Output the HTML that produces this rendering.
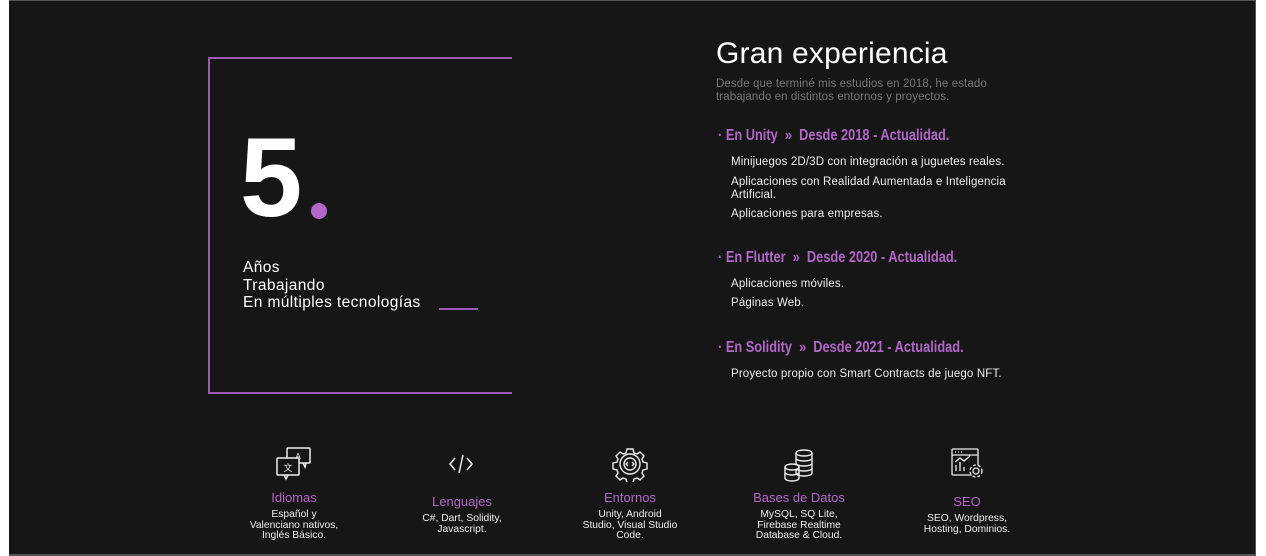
<!DOCTYPE html>
<html><head><meta charset="utf-8"><style>
*{margin:0;padding:0;box-sizing:border-box}
body{width:1266px;height:556px;background:#fff;position:relative;overflow:hidden;font-family:"Liberation Sans",sans-serif}
#bg{position:absolute;left:9px;top:0;width:1247px;height:556px;background:#161616;border-top:1px solid #555;border-bottom:2px solid #555;border-right:1px solid #555}
.a{position:absolute}
.h{font-family:"Liberation Sans Narrow","Liberation Sans",sans-serif;font-weight:bold;font-size:16px;color:#b266c8;transform:scaleX(0.8);transform-origin:0 0;white-space:nowrap}
.li{font-size:11.5px;color:#eee;letter-spacing:0.15px}
.ic{position:absolute;text-align:center;width:160px}
.ic .t{font-size:13px;color:#b266c8}
.ic .d{font-size:10.3px;color:#eee;line-height:10.5px;margin-top:5px}
</style></head><body>
<div id="bg"></div>
<div class="a" style="left:208px;top:57px;width:304px;height:337px;border:2px solid #9b5bb0;border-right:none"></div>
<div class="a" style="left:240px;top:118px;font-size:112px;font-weight:bold;color:#fff;line-height:120px">5</div>
<div class="a" style="left:311px;top:203px;width:16px;height:16px;border-radius:50%;background:#b266c8"></div>
<div class="a" style="left:243px;top:259px;color:#fff;font-size:15.5px;line-height:17.5px;letter-spacing:0.4px">Años<br>Trabajando<br>En múltiples tecnologías</div>
<div class="a" style="left:439px;top:308px;width:39px;height:2px;background:#9b5bb0"></div>

<div class="a" style="left:716px;top:37px;color:#fff;font-size:30px;letter-spacing:0.2px">Gran experiencia</div>
<div class="a" style="left:716px;top:78px;color:#777;font-size:11.5px;line-height:13px;letter-spacing:0.1px">Desde que terminé mis estudios en 2018, he estado<br>trabajando en distintos entornos y proyectos.</div>

<div class="a h" style="left:718px;top:127px">· En Unity &nbsp;» &nbsp;Desde 2018 - Actualidad.</div>
<div class="a li" style="left:731px;top:156px">Minijuegos 2D/3D con integración a juguetes reales.</div>
<div class="a li" style="left:731px;top:176px;line-height:12.5px">Aplicaciones con Realidad Aumentada e Inteligencia<br>Artificial.</div>
<div class="a li" style="left:731px;top:208px">Aplicaciones para empresas.</div>

<div class="a h" style="left:718px;top:249px">· En Flutter &nbsp;» &nbsp;Desde 2020 - Actualidad.</div>
<div class="a li" style="left:731px;top:278px">Aplicaciones móviles.</div>
<div class="a li" style="left:731px;top:297px">Páginas Web.</div>

<div class="a h" style="left:718px;top:339px">· En Solidity &nbsp;» &nbsp;Desde 2021 - Actualidad.</div>
<div class="a li" style="left:731px;top:368px">Proyecto propio con Smart Contracts de juego NFT.</div>

<svg class="a" style="left:270px;top:444px" width="44" height="40" viewBox="0 0 44 40" fill="none" stroke="#eee" stroke-width="1.5">
<rect x="17" y="4" width="23" height="15" rx="1"/><path d="M33 19l2 4 1-4"/><rect x="7" y="14" width="22" height="17" rx="1" fill="#161616"/><path d="M14 31l2 4 2-4"/><text x="28" y="15" font-size="8" fill="#eee" stroke="none" text-anchor="middle" font-family="Liberation Sans">A</text><text x="18" y="27" font-size="9" fill="#eee" stroke="none" text-anchor="middle">文</text></svg>
<svg class="a" style="left:448px;top:452px" width="26" height="24" viewBox="0 0 26 24" fill="none" stroke="#eee" stroke-width="1.5"><path d="M7 6l-5 6 5 6M19 6l5 6-5 6M15 3l-4 18"/></svg>
<svg class="a" style="left:612px;top:446px" width="36" height="36" viewBox="0 0 36 36" fill="none" stroke="#eee" stroke-width="1.4"><circle cx="18" cy="18" r="10"/><circle cx="18" cy="18" r="6"/><path d="M15 3h6l1 4 3 1 3-2 4 4-2 3 1 3 4 1v6l-4 1-1 3 2 3-4 4-3-2-3 1-1 4h-6l-1-4-3-1-3 2-4-4 2-3-1-3-4-1v-6l4-1 1-3-2-3 4-4 3 2 3-1z"/><path d="M16 16l-2 2 2 2M20 16l2 2-2 2"/></svg>
<svg class="a" style="left:781px;top:447px" width="36" height="36" viewBox="0 0 36 36" fill="none" stroke="#eee" stroke-width="1.4"><ellipse cx="23" cy="6" rx="8" ry="3"/><path d="M15 6v20M31 6v20M15 11c0 4 16 4 16 0M15 16c0 4 16 4 16 0M15 21c0 4 16 4 16 0M15 26c0 4 16 4 16 0"/><ellipse cx="11" cy="20" rx="7" ry="3" fill="#161616"/><path d="M4 20v11c0 4 14 4 14 0V20M4 25c0 4 14 4 14 0"/></svg>
<svg class="a" style="left:949px;top:447px" width="36" height="34" viewBox="0 0 36 34" fill="none" stroke="#eee" stroke-width="1.3"><rect x="3" y="2" width="26" height="26" rx="1"/><path d="M3 8h26M6 5h1M9 5h1M12 5h1M7 24v-6M11 24v-9M15 24v-4M6 15l5-4 4 3 6-5"/><circle cx="27" cy="24" r="6" fill="#161616" stroke-dasharray="3 2"/><circle cx="27" cy="24" r="3"/></svg>

<div class="ic" style="left:214px;top:490px"><div class="t">Idiomas</div><div class="d">Español y<br>Valenciano nativos,<br>Inglés Básico.</div></div>
<div class="ic" style="left:382px;top:494px"><div class="t">Lenguajes</div><div class="d">C#, Dart, Solidity,<br>Javascript.</div></div>
<div class="ic" style="left:550px;top:490px"><div class="t">Entornos</div><div class="d">Unity, Android<br>Studio, Visual Studio<br>Code.</div></div>
<div class="ic" style="left:719px;top:490px"><div class="t">Bases de Datos</div><div class="d">MySQL, SQ Lite,<br>Firebase Realtime<br>Database &amp; Cloud.</div></div>
<div class="ic" style="left:887px;top:494px"><div class="t">SEO</div><div class="d">SEO, Wordpress,<br>Hosting, Dominios.</div></div>
</body></html>
